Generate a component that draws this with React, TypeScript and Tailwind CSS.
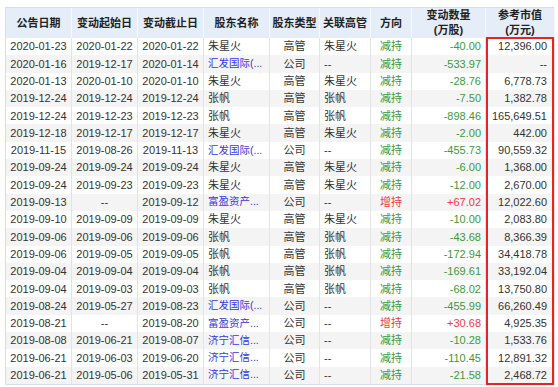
type Row = {
  date: string
  start: string
  end: string
  holder: string
  link?: boolean
  kind: string
  exec: string
  dir: '减持' | '增持'
  qty: string
  value: string
}

const rows: Row[] = [
  { date: '2020-01-23', start: '2020-01-22', end: '2020-01-22', holder: '朱星火', kind: '高管', exec: '朱星火', dir: '减持', qty: '-40.00', value: '12,396.00' },
  { date: '2020-01-16', start: '2019-12-17', end: '2020-01-14', holder: '汇发国际(...', link: true, kind: '公司', exec: '--', dir: '减持', qty: '-533.97', value: '--' },
  { date: '2020-01-13', start: '2020-01-10', end: '2020-01-10', holder: '朱星火', kind: '高管', exec: '朱星火', dir: '减持', qty: '-28.76', value: '6,778.73' },
  { date: '2019-12-24', start: '2019-12-24', end: '2019-12-24', holder: '张帆', kind: '高管', exec: '张帆', dir: '减持', qty: '-7.50', value: '1,382.78' },
  { date: '2019-12-24', start: '2019-12-23', end: '2019-12-23', holder: '张帆', kind: '高管', exec: '张帆', dir: '减持', qty: '-898.46', value: '165,649.51' },
  { date: '2019-12-18', start: '2019-12-17', end: '2019-12-17', holder: '朱星火', kind: '高管', exec: '朱星火', dir: '减持', qty: '-2.00', value: '442.00' },
  { date: '2019-11-15', start: '2019-08-26', end: '2019-11-13', holder: '汇发国际(...', link: true, kind: '公司', exec: '--', dir: '减持', qty: '-455.73', value: '90,559.32' },
  { date: '2019-09-24', start: '2019-09-24', end: '2019-09-24', holder: '朱星火', kind: '高管', exec: '朱星火', dir: '减持', qty: '-6.00', value: '1,368.00' },
  { date: '2019-09-24', start: '2019-09-23', end: '2019-09-23', holder: '朱星火', kind: '高管', exec: '朱星火', dir: '减持', qty: '-12.00', value: '2,670.00' },
  { date: '2019-09-13', start: '--', end: '2019-09-12', holder: '富盈资产...', link: true, kind: '公司', exec: '--', dir: '增持', qty: '+67.02', value: '12,022.60' },
  { date: '2019-09-10', start: '2019-09-09', end: '2019-09-09', holder: '朱星火', kind: '高管', exec: '朱星火', dir: '减持', qty: '-10.00', value: '2,083.80' },
  { date: '2019-09-06', start: '2019-09-06', end: '2019-09-06', holder: '张帆', kind: '高管', exec: '张帆', dir: '减持', qty: '-43.68', value: '8,366.39' },
  { date: '2019-09-06', start: '2019-09-05', end: '2019-09-05', holder: '张帆', kind: '高管', exec: '张帆', dir: '减持', qty: '-172.94', value: '34,418.78' },
  { date: '2019-09-04', start: '2019-09-04', end: '2019-09-04', holder: '张帆', kind: '高管', exec: '张帆', dir: '减持', qty: '-169.61', value: '33,192.04' },
  { date: '2019-09-04', start: '2019-09-03', end: '2019-09-03', holder: '张帆', kind: '高管', exec: '张帆', dir: '减持', qty: '-68.02', value: '13,750.80' },
  { date: '2019-08-24', start: '2019-05-27', end: '2019-08-23', holder: '汇发国际(...', link: true, kind: '公司', exec: '--', dir: '减持', qty: '-455.99', value: '66,260.49' },
  { date: '2019-08-21', start: '--', end: '2019-08-20', holder: '富盈资产...', link: true, kind: '公司', exec: '--', dir: '增持', qty: '+30.68', value: '4,925.35' },
  { date: '2019-08-08', start: '2019-06-21', end: '2019-08-07', holder: '济宁汇信...', link: true, kind: '公司', exec: '--', dir: '减持', qty: '-10.28', value: '1,533.76' },
  { date: '2019-06-21', start: '2019-06-03', end: '2019-06-20', holder: '济宁汇信...', link: true, kind: '公司', exec: '--', dir: '减持', qty: '-110.45', value: '12,891.32' },
  { date: '2019-06-21', start: '2019-05-06', end: '2019-05-31', holder: '济宁汇信...', link: true, kind: '公司', exec: '--', dir: '减持', qty: '-21.58', value: '2,468.72' },
]

const cols = 'grid grid-cols-[66px_66px_66px_66px_50px_51px_41px_74px_69px]'
const cell = 'flex items-center border-r border-[#e3e3e3] whitespace-nowrap min-w-0'
const head = 'flex flex-col items-center justify-center border-r border-[#f7f9fc] leading-[15px]'

function Holder({ name, link }: { name: string; link?: boolean }) {
  if (!link) return <div className={`${cell} pl-[4px]`}>{name}</div>
  return <div className={`${cell} pl-[4px] text-[#3636e0] text-[10.5px]`}>{name}</div>
}

export default function App() {
  return (
    <div className="w-[558px] h-[387px] bg-white pt-[7px] pl-[5px] font-['Liberation_Sans','Noto_Sans_CJK_SC',sans-serif] text-[11px] text-[#333]">
      <div className="w-[549px] border-l border-t border-b border-[#d3deeb]">
        <div className={`${cols} h-[30px] bg-[#e5edf8] font-bold text-[#222]`}>
          <div className={head}>公告日期</div>
          <div className={head}>变动起始日</div>
          <div className={head}>变动截止日</div>
          <div className={head}>股东名称</div>
          <div className={head}>股东类型</div>
          <div className={head}>关联高管</div>
          <div className={head}>方向</div>
          <div className={head}>
            <span>变动数量</span>
            <span>(万股)</span>
          </div>
          <div className={head}>
            <span>参考市值</span>
            <span>(万元)</span>
          </div>
        </div>

        <div className="relative">
          {rows.map((r, i) => (
            <div key={i} className={`${cols} h-[17.3px] ${i % 2 ? 'bg-[#f4f4f4]' : 'bg-white'}`}>
              <div className={`${cell} justify-center`}>{r.date}</div>
              <div className={`${cell} justify-center`}>{r.start}</div>
              <div className={`${cell} justify-center`}>{r.end}</div>
              <Holder name={r.holder} link={r.link} />
              <div className={`${cell} justify-center`}>{r.kind}</div>
              <div className={`${cell} pl-[4px]`}>{r.exec}</div>
              <div className={`${cell} justify-center ${r.dir === '增持' ? 'text-[#f03a3a]' : 'text-[#3c9a3c]'}`}>{r.dir}</div>
              <div className={`${cell} justify-end pr-[4px] ${r.dir === '增持' ? 'text-[#f03a3a]' : 'text-[#3c9a3c]'}`}>{r.qty}</div>
              <div className={`${cell} justify-end pr-[7px]`}>{r.value}</div>
            </div>
          ))}
          <div className="absolute left-[480px] top-[-1px] w-[68px] bottom-[-1px] border-2 border-[#e62424]" />
        </div>
      </div>
    </div>
  )
}
